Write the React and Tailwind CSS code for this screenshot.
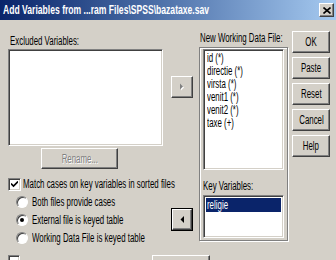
import React from "react";

const sunken =
    "border border-t-[#808080] border-l-[#808080] border-b-white border-r-white shadow-[inset_1px_1px_0_#404040,inset_-1px_-1px_0_#d4d0c8]";
const raised =
    "border border-t-white border-l-white border-b-[#404040] border-r-[#404040] shadow-[inset_-1px_-1px_0_#808080]";

// the dialog font is tall and narrow, so text is squeezed sideways
const T = ({ children, className = "" }) => (
    <span className={`inline-block whitespace-nowrap origin-left scale-x-[0.63] ${className}`}>{children}</span>
);

const Btn = ({ label, className = "" }) => (
    <div className={`h-[22px] w-[38px] flex items-center justify-center bg-[#d4d0c8] ${raised} ${className}`}>
        <span className="inline-block whitespace-nowrap origin-center scale-x-[0.63]">{label}</span>
    </div>
);

const Radio = ({ checked, label }) => (
    <div className="h-[18px] flex items-center pl-[8px]">
        <div className="shrink-0 w-[12px] h-[12px] rounded-full bg-white border border-t-[#808080] border-l-[#808080] border-b-white border-r-white flex items-center justify-center shadow-[inset_1px_1px_0_#404040]">
            {checked && <div className="w-[4px] h-[4px] rounded-full bg-black" />}
        </div>
        <T className="ml-[4px]">{label}</T>
    </div>
);

const App = () => {
    const working = ["id (*)", "directie (*)", "virsta (*)", "venit1 (*)", "venit2 (*)", "taxe (+)"];
    return (
        <div className="w-[336px] h-[260px] overflow-hidden bg-[#d4d0c8] text-black text-[12.5px] leading-[14px] [font-family:'Liberation_Sans',Arial,sans-serif]">
            {/* title bar */}
            <div className="h-[20px] flex items-center justify-between bg-gradient-to-r from-[#0a246a] to-[#a6caf0] pl-[3px] pr-[2px]">
                <T className="text-white font-bold text-[13px] scale-x-[0.66]">
                    {"Add Variables from ...ram Files\\SPSS\\bazataxe.sav"}
                </T>
                <div className={`shrink-0 w-[15px] h-[14px] bg-[#d4d0c8] flex items-center justify-center ${raised}`}>
                    <svg width="8" height="7" viewBox="0 0 8 7">
                        <path d="M0.5 0.5L7.5 6.5M7.5 0.5L0.5 6.5" stroke="black" strokeWidth="1.6" />
                    </svg>
                </div>
            </div>

            <div className="flex pl-[8px]">
                {/* left column */}
                <div className="shrink-0 w-[155px] flex flex-col">
                    <div className="mt-[14px] h-[14px] pl-[2px]"><T>Excluded Variables:</T></div>
                    <div className={`mt-[1px] h-[97px] bg-white ${sunken}`} />
                    <div className={`mt-[2px] ml-[33px] w-[77px] h-[21px] flex items-center justify-center text-[#808080] [text-shadow:1px_1px_0_#fff] ${raised}`}>
                        <span className="inline-block whitespace-nowrap origin-center scale-x-[0.63]">Rename...</span>
                    </div>
                    <div className="mt-[8px] h-[14px] flex items-center">
                        <div className={`shrink-0 w-[13px] h-[13px] bg-white flex items-center justify-center ${sunken}`}>
                            <svg width="7" height="7" viewBox="0 0 7 7">
                                <path d="M0 2.5L2.5 5L7 0.5" stroke="black" strokeWidth="1.6" fill="none" />
                            </svg>
                        </div>
                        <T className="ml-[2px]">Match cases on key variables in sorted files</T>
                    </div>
                    <div className="mt-[2px]">
                        <Radio label="Both files provide cases" />
                        <Radio checked label="External file is keyed table" />
                        <Radio label="Working Data File is keyed table" />
                    </div>
                    <div className="mt-[8px] flex items-start">
                        <div className={`shrink-0 w-[12px] h-[12px] bg-white ${sunken}`} />
                        <div className={`shrink-0 ml-[132px] w-[58px] h-[22px] ${raised}`} />
                    </div>
                </div>

                {/* arrow column */}
                <div className="shrink-0 ml-[8px] w-[22px] flex flex-col">
                    <div className={`mt-[56px] h-[22px] flex items-center justify-center ${raised}`}>
                        <svg width="6" height="9" viewBox="0 0 6 9">
                            <path d="M2 1.5L5 4.5L2 7.5Z" fill="white" />
                            <path d="M1 0.5L4 3.5L1 6.5Z" fill="#808080" />
                        </svg>
                    </div>
                    <div className="mt-[110px] h-[23px] border border-black">
                        <div className={`h-full flex items-center justify-center ${raised}`}>
                            <svg width="4" height="7" viewBox="0 0 4 7">
                                <path d="M4 0L0.5 3.5L4 7Z" fill="black" />
                            </svg>
                        </div>
                    </div>
                </div>

                {/* working file / key variables */}
                <div className="shrink-0 ml-[6px] w-[89px] flex flex-col">
                    <div className="mt-[11px] h-[14px] pl-[1px]"><T>New Working Data File:</T></div>
                    <div className="mt-[2px] h-[194px] border border-[#808080] shadow-[inset_1px_1px_0_#fff,1px_1px_0_#fff] px-[3px] pt-[1px] flex flex-col">
                        <div className={`h-[121px] bg-white pl-[3px] pt-[2px] ${sunken}`}>
                            {working.map((w) => (
                                <div key={w} className="h-[13px] leading-[13px]"><T>{w}</T></div>
                            ))}
                        </div>
                        <div className="mt-[9px] h-[14px]"><T>Key Variables:</T></div>
                        <div className={`mt-[2px] h-[43px] bg-white p-[2px] ${sunken}`}>
                            <div className="h-[14px] bg-[#0a246a] text-white pl-[1px] leading-[14px]"><T>religie</T></div>
                        </div>
                    </div>
                </div>

                {/* buttons */}
                <div className="shrink-0 ml-[4px] flex flex-col gap-[4px] pt-[11px]">
                    <Btn label="OK" />
                    <Btn label="Paste" />
                    <Btn label="Reset" />
                    <Btn label="Cancel" />
                    <Btn label="Help" />
                </div>
            </div>
        </div>
    );
};

export default App;
